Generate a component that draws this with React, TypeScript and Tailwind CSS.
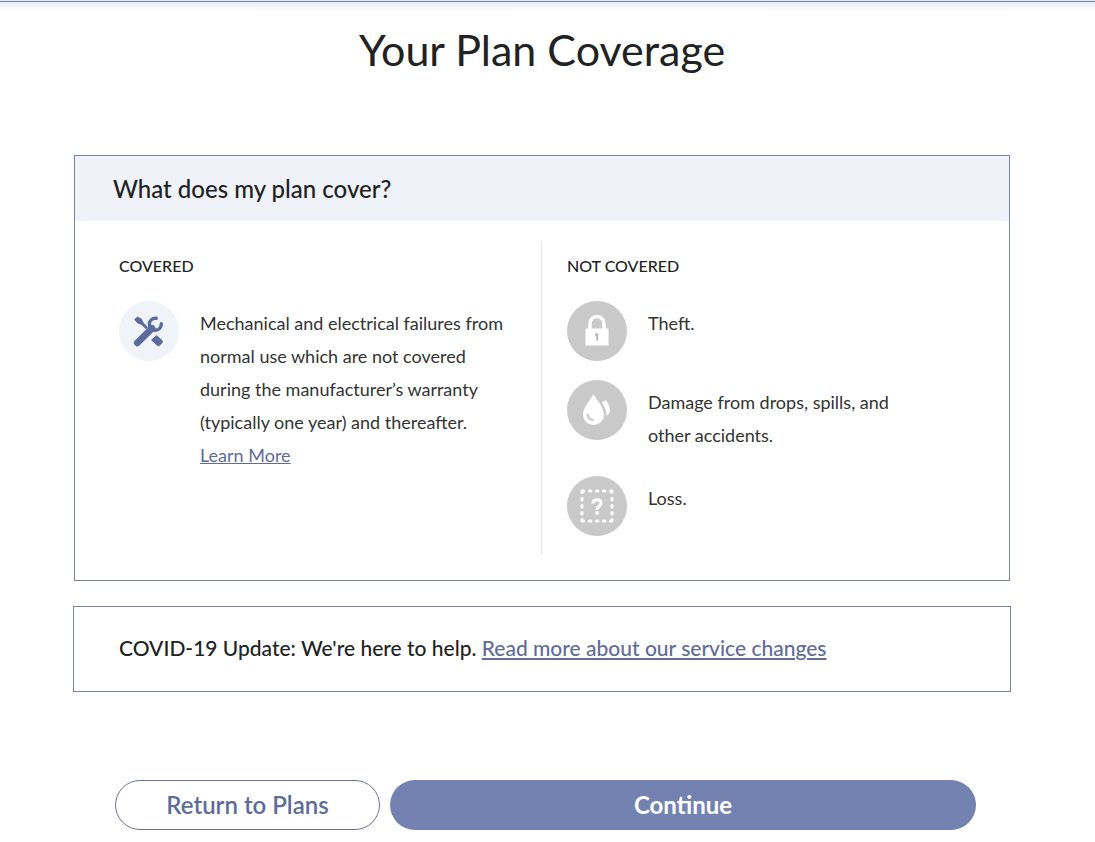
import type { ReactNode } from "react";

function ToolsIcon() {
  return (
    <svg viewBox="0 0 60 60" className="size-full" aria-hidden="true">
      <path d="M15.200 18.400 18.400 15.500l4.200 2.200 2 4 4.400 4.600-2 2-4.400-4.400-4.200-1.600z" fill="#5c6b9e" />
      <path d="m37.500 34 5.800 5.200a2 2 0 0 1 0 2.800l-2.500 2.500a2 2 0 0 1-2.800 0L32 39z" fill="#5c6b9e" />
      <path d="M18.300 41.800 33 27.300" stroke="#5c6b9e" strokeWidth="6.800" strokeLinecap="round" />
      <path d="M37.300 17.300A6 6 0 1 0 42.300 22.800" fill="none" stroke="#5c6b9e" strokeWidth="3.400" strokeLinecap="round" />
    </svg>
  );
}

function LockIcon() {
  return (
    <svg viewBox="0 0 60 60" className="size-full" aria-hidden="true">
      <path d="M23 29v-6.500a7 7 0 0 1 14 0V29" fill="none" stroke="#fff" strokeWidth="3.400" />
      <rect x="18.500" y="27.500" width="23" height="17" fill="#fff" />
      <path d="M28.200 32.300h3v7.200h-2v-4.300h-1z" fill="#b8b8b8" />
    </svg>
  );
}

function DropIcon() {
  return (
    <svg viewBox="0 0 60 60" className="size-full" aria-hidden="true">
      <path d="M26.500 14c3.500 6.500 10.500 13.500 10.500 20.500a10.500 10.500 0 0 1-21 0C16 27.500 23 20.500 26.500 14z" fill="#fff" />
      <path d="M20.500 34.500c.4 3 2.300 5 5.200 5.600" fill="none" stroke="#c9c9c9" strokeWidth="2" strokeLinecap="round" />
      <path d="m34.800 22.500 4.200-2.500c1.600 3.500 4 6.500 4 10 0 2.500-1.500 4.800-3.700 5.500.6-5-2-9-4.500-13z" fill="#fff" />
    </svg>
  );
}

function LossIcon() {
  return (
    <svg viewBox="0 0 60 60" className="size-full" aria-hidden="true">
      <path
        d="M15 15h1.500M22.500 15h1.500M29.500 15h1.500M36.500 15h1.500M43.500 15h1M15 45h1.500M22.500 45h1.500M29.500 45h1.500M36.500 45h1.500M43.500 45h1M15 15v1.500M15 22.500v1.500M15 29.500v1.500M15 36.500v1.500M15 43.500v1M45 15v1.500M45 22.500v1.500M45 29.500v1.500M45 36.500v1.500M45 43.500v1"
        stroke="#fff"
        strokeWidth="3"
        strokeLinecap="round"
      />
      <path d="M26 27.500c0-2.500 1.700-3.700 4-3.700s4 1.300 4 3.500c0 3.200-4 2.700-4 6.400" fill="none" stroke="#fff" strokeWidth="3" />
      <rect x="28.300" y="35.300" width="3.400" height="3.200" fill="#fff" />
    </svg>
  );
}

function Item({ icon, tone, children }: { icon: ReactNode; tone: "blue" | "gray"; children: ReactNode }) {
  return (
    <li className="flex gap-[21px]">
      <span className={`size-[60px] shrink-0 rounded-full ${tone === "blue" ? "bg-[#f0f3f8]" : "bg-[#c9c9c9]"}`}>{icon}</span>
      <p className="pt-1.5 text-[18px] leading-[33px] text-[#333]">{children}</p>
    </li>
  );
}

export default function App() {
  return (
    <div className="min-h-screen bg-white pb-3 font-['Lato',sans-serif] text-[#222]">
      <div className="h-3 bg-linear-to-b from-[#e3e9f5] to-white pt-px">
        <div className="h-px bg-[#77829f]" />
      </div>
      <main className="pr-[85px] pl-[74px]">
        <h1 className="pt-2.5 text-center text-[43px] leading-[56px]">Your Plan Coverage</h1>

        <section className="mt-[77px] border border-[#7a80a8]">
          <h2 className="bg-[#f0f2f9] px-[38px] text-[24px] leading-[65px] font-medium">What does my plan cover?</h2>
          <div className="grid grid-cols-[466fr_468fr] pt-5 pb-[25px]">
            <div className="pr-9 pl-11">
              <h3 className="pt-[13px] text-[16px] leading-6 font-medium">COVERED</h3>
              <ul className="mt-[23px]">
                <Item icon={<ToolsIcon />} tone="blue">
                  Mechanical and electrical failures from normal use which are not covered during the manufacturer’s warranty
                  (typically one year) and thereafter.
                  <br />
                  <a href="#learn-more" className="text-[#5f6b98] underline">
                    Learn More
                  </a>
                </Item>
              </ul>
            </div>
            <div className="border-l border-[#e8e8ec] pr-[110px] pb-[19px] pl-[25px]">
              <h3 className="pt-[13px] text-[16px] leading-6 font-medium">NOT COVERED</h3>
              <ul className="mt-[23px] flex flex-col">
                <Item icon={<LockIcon />} tone="gray">Theft.</Item>
                <li className="h-[19px]" aria-hidden="true" />
                <Item icon={<DropIcon />} tone="gray">Damage from drops, spills, and other accidents.</Item>
                <li className="h-6" aria-hidden="true" />
                <Item icon={<LossIcon />} tone="gray">Loss.</Item>
              </ul>
            </div>
          </div>
        </section>

        <p className="-mx-px mt-[25px] border border-[#7a80a8] px-[45px] pt-[25px] pb-[27px] text-[21px] leading-8 font-medium">
          COVID-19 Update: We're here to help.{" "}
          <a href="#service-changes" className="text-[#5f6b98] underline">
            Read more about our service changes
          </a>
        </p>

        <div className="mt-[88px] flex gap-2.5 pr-[34px] pl-[41px]">
          <button type="button" className="h-[50px] w-[265px] shrink-0 rounded-full border border-[#6b6f99] text-[24px] font-semibold text-[#5f6b98]">
            Return to Plans
          </button>
          <button type="button" className="h-[50px] flex-1 rounded-full bg-[#7482b2] text-[24px] font-bold text-white">
            Continue
          </button>
        </div>
      </main>
    </div>
  );
}
